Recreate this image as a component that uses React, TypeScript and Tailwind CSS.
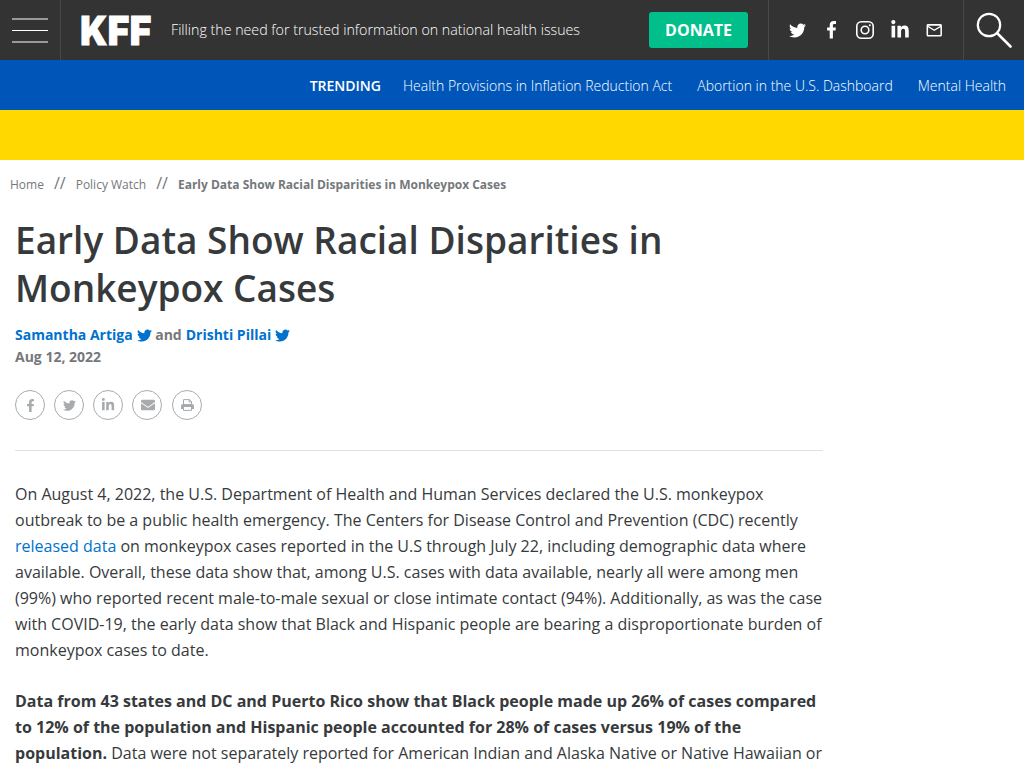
import React from 'react';
import { FaEnvelope, FaFacebookF, FaLinkedinIn, FaTwitter } from 'react-icons/fa';
import { MdMailOutline } from 'react-icons/md';

const trending = [
  'Health Provisions in Inflation Reduction Act',
  'Abortion in the U.S. Dashboard',
  'Mental Health',
];

const Logo = () => (
  <svg className="ml-4 block h-[60px] w-[76px] shrink-0" viewBox="0 0 76 60" aria-label="KFF">
    <g fill="#fff" stroke="#fff" strokeWidth="1" fontFamily="Inter, sans-serif" fontWeight="900" fontSize="40">
      <text x="3.3" y="44.5" textLength="27" lengthAdjust="spacingAndGlyphs">K</text>
      <text x="30.8" y="44.5" textLength="21.5" lengthAdjust="spacingAndGlyphs">F</text>
      <text x="52.8" y="44.5" textLength="21.5" lengthAdjust="spacingAndGlyphs">F</text>
    </g>
  </svg>
);

const InstagramIcon = () => (
  <svg className="size-[18px]" viewBox="0 0 18 18" fill="none" stroke="currentColor" strokeWidth="1.6">
    <rect x="0.8" y="0.8" width="16.4" height="16.4" rx="4.5" />
    <circle cx="9" cy="9" r="3.8" />
    <circle cx="13.8" cy="4.2" r="1" fill="currentColor" stroke="none" />
  </svg>
);

const PrintIcon = () => (
  <svg className="h-3 w-[13px]" viewBox="0 0 13 12" fill="none" stroke="currentColor">
    <path d="M2.5 6V0.6H8.5L10.5 2.6V6M8.2 0.6V3H10.5" />
    <path
      d="M2 5H11A2 2 0 0 1 13 7V10H10.5V8H2.5V10H0V7A2 2 0 0 1 2 5Z"
      fill="currentColor"
      stroke="none"
    />
    <path d="M2.5 8V11.4H10.5V8" />
  </svg>
);

const ShareButton = ({ children, className = '' }: { children: React.ReactNode; className?: string }) => (
  <a className={`flex size-[30px] items-center justify-center rounded-full border border-[#a7abae] text-[#a7abae] ${className}`}>
    {children}
  </a>
);

const Header = () => (
  <header className="flex h-[60px] items-center bg-[#333] text-white">
    <button className="flex h-full w-[61px] shrink-0 items-center border-r border-[#484848] pl-3">
      <svg className="h-[26px] w-9" viewBox="0 0 36 26" stroke="currentColor">
        <path d="M0 2h36M0 13.5h36M0 25h36" strokeWidth="1.2" />
      </svg>
    </button>
    <Logo />
    <p className="ml-[18px] text-[14.22px] font-light whitespace-nowrap">
      Filling the need for trusted information on national health issues
    </p>
    <a className="ml-auto flex h-9 w-[99px] shrink-0 items-center justify-center rounded-[3px] bg-[#00bf8a] text-base font-bold">
      DONATE
    </a>
    <div className="ml-5 flex h-full w-[196px] shrink-0 items-center border-x border-[#484848] pl-5">
      <FaTwitter className="size-[17px]" />
      <svg className="ml-[21px] h-[18px] w-[9px]" viewBox="0 0 9 18" fill="currentColor">
        <path d="M9 0.2V3.1H7.4C6.2 3.1 5.9 3.7 5.9 4.5V6.4H8.9L8.5 9.4H5.9V17.4H2.7V9.4H0.1V6.4H2.7V4.2C2.7 1.5 4.3 0.1 6.7 0.1C7.8 0.1 8.7 0.2 9 0.2Z" />
      </svg>
      <div className="ml-5"><InstagramIcon /></div>
      <FaLinkedinIn className="ml-4 size-5" />
      <MdMailOutline className="ml-[15px] size-[18.5px]" />
    </div>
    <div className="flex h-full w-[60px] shrink-0 items-center pl-3">
      <svg className="h-9 w-[37px]" viewBox="0 0 37 36" fill="none" stroke="currentColor">
        <circle cx="13" cy="13" r="11.2" strokeWidth="2.2" />
        <path d="M21 21L34.5 34.5" strokeWidth="2.6" strokeLinecap="round" />
      </svg>
    </div>
  </header>
);

const Trending = () => (
  <nav className="flex h-[50px] items-center justify-end bg-[#0056b8] pt-px pr-[18px] text-sm font-light text-white">
    <span className="mr-[22px] font-semibold">TRENDING</span>
    <ul className="flex gap-[25px]">
      {trending.map((item) => (
        <li key={item}>{item}</li>
      ))}
    </ul>
  </nav>
);

const Breadcrumbs = () => (
  <div className="flex h-[49px] items-center pl-2.5 text-xs text-[#75787b]">
    <span>Home</span>
    <span className="mx-2.5 pb-[3px] text-base">//</span>
    <span>Policy Watch</span>
    <span className="mx-2.5 pb-[3px] text-base">//</span>
    <span className="font-bold">Early Data Show Racial Disparities in Monkeypox Cases</span>
  </div>
);

export default function App() {
  return (
    <div className="h-[768px] overflow-hidden bg-white font-['Open_Sans',sans-serif] text-[#373a3c]">
      <Header />
      <Trending />
      <div className="h-[50px] bg-[#ffd800]" />
      <Breadcrumbs />
      <main className="ml-[15px] w-[808px]">
        <h1 className="pt-[7px] text-[37px] leading-[48px] font-semibold">
          Early Data Show Racial Disparities in
          <br />
          Monkeypox Cases
        </h1>
        <div className="mt-3 text-sm leading-[22px] font-bold text-[#75787b]">
          <div className="flex items-center">
            <a className="text-[#0072ce]">Samantha Artiga</a>
            <FaTwitter className="ml-1 size-[15px] text-[#0072ce]" />
            <span className="mr-1 ml-[3.5px]">and</span>
            <a className="text-[#0072ce]">Drishti Pillai</a>
            <FaTwitter className="ml-[3.5px] size-[15px] text-[#0072ce]" />
          </div>
          <div>Aug 12, 2022</div>
        </div>
        <div className="mt-[22px] flex gap-[9px]">
          <ShareButton><FaFacebookF className="size-[13px]" /></ShareButton>
          <ShareButton><FaTwitter className="size-[13px]" /></ShareButton>
          <ShareButton><FaLinkedinIn className="size-[14px]" /></ShareButton>
          <ShareButton className="pl-px"><FaEnvelope className="size-[14px]" /></ShareButton>
          <ShareButton className="ml-px"><PrintIcon /></ShareButton>
        </div>
        <hr className="mt-[30px] border-[#dfe0e1]" />
        <div className="mt-[30px] text-base leading-[26px]">
          <p>
            On August 4, 2022, the U.S. Department of Health and Human Services declared the U.S. monkeypox
            outbreak to be a public health emergency. The Centers for Disease Control and Prevention (CDC)
            recently <a className="text-[#0072ce]">released data</a> on monkeypox cases reported in the U.S
            through July 22, including demographic data where available. Overall, these data show that, among
            U.S. cases with data available, nearly all were among men (99%) who reported recent male-to-male
            sexual or close intimate contact (94%). Additionally, as was the case with COVID-19, the early
            data show that Black and Hispanic people are bearing a disproportionate burden of monkeypox cases
            to date.
          </p>
          <p className="mt-[25px]">
            <strong>
              Data from 43 states and DC and Puerto Rico show that Black people made up 26% of cases compared
              to 12% of the population and Hispanic people accounted for 28% of cases versus 19% of the
              population.
            </strong>{' '}
            Data were not separately reported for American Indian and Alaska Native or Native Hawaiian or
          </p>
        </div>
      </main>
    </div>
  );
}
